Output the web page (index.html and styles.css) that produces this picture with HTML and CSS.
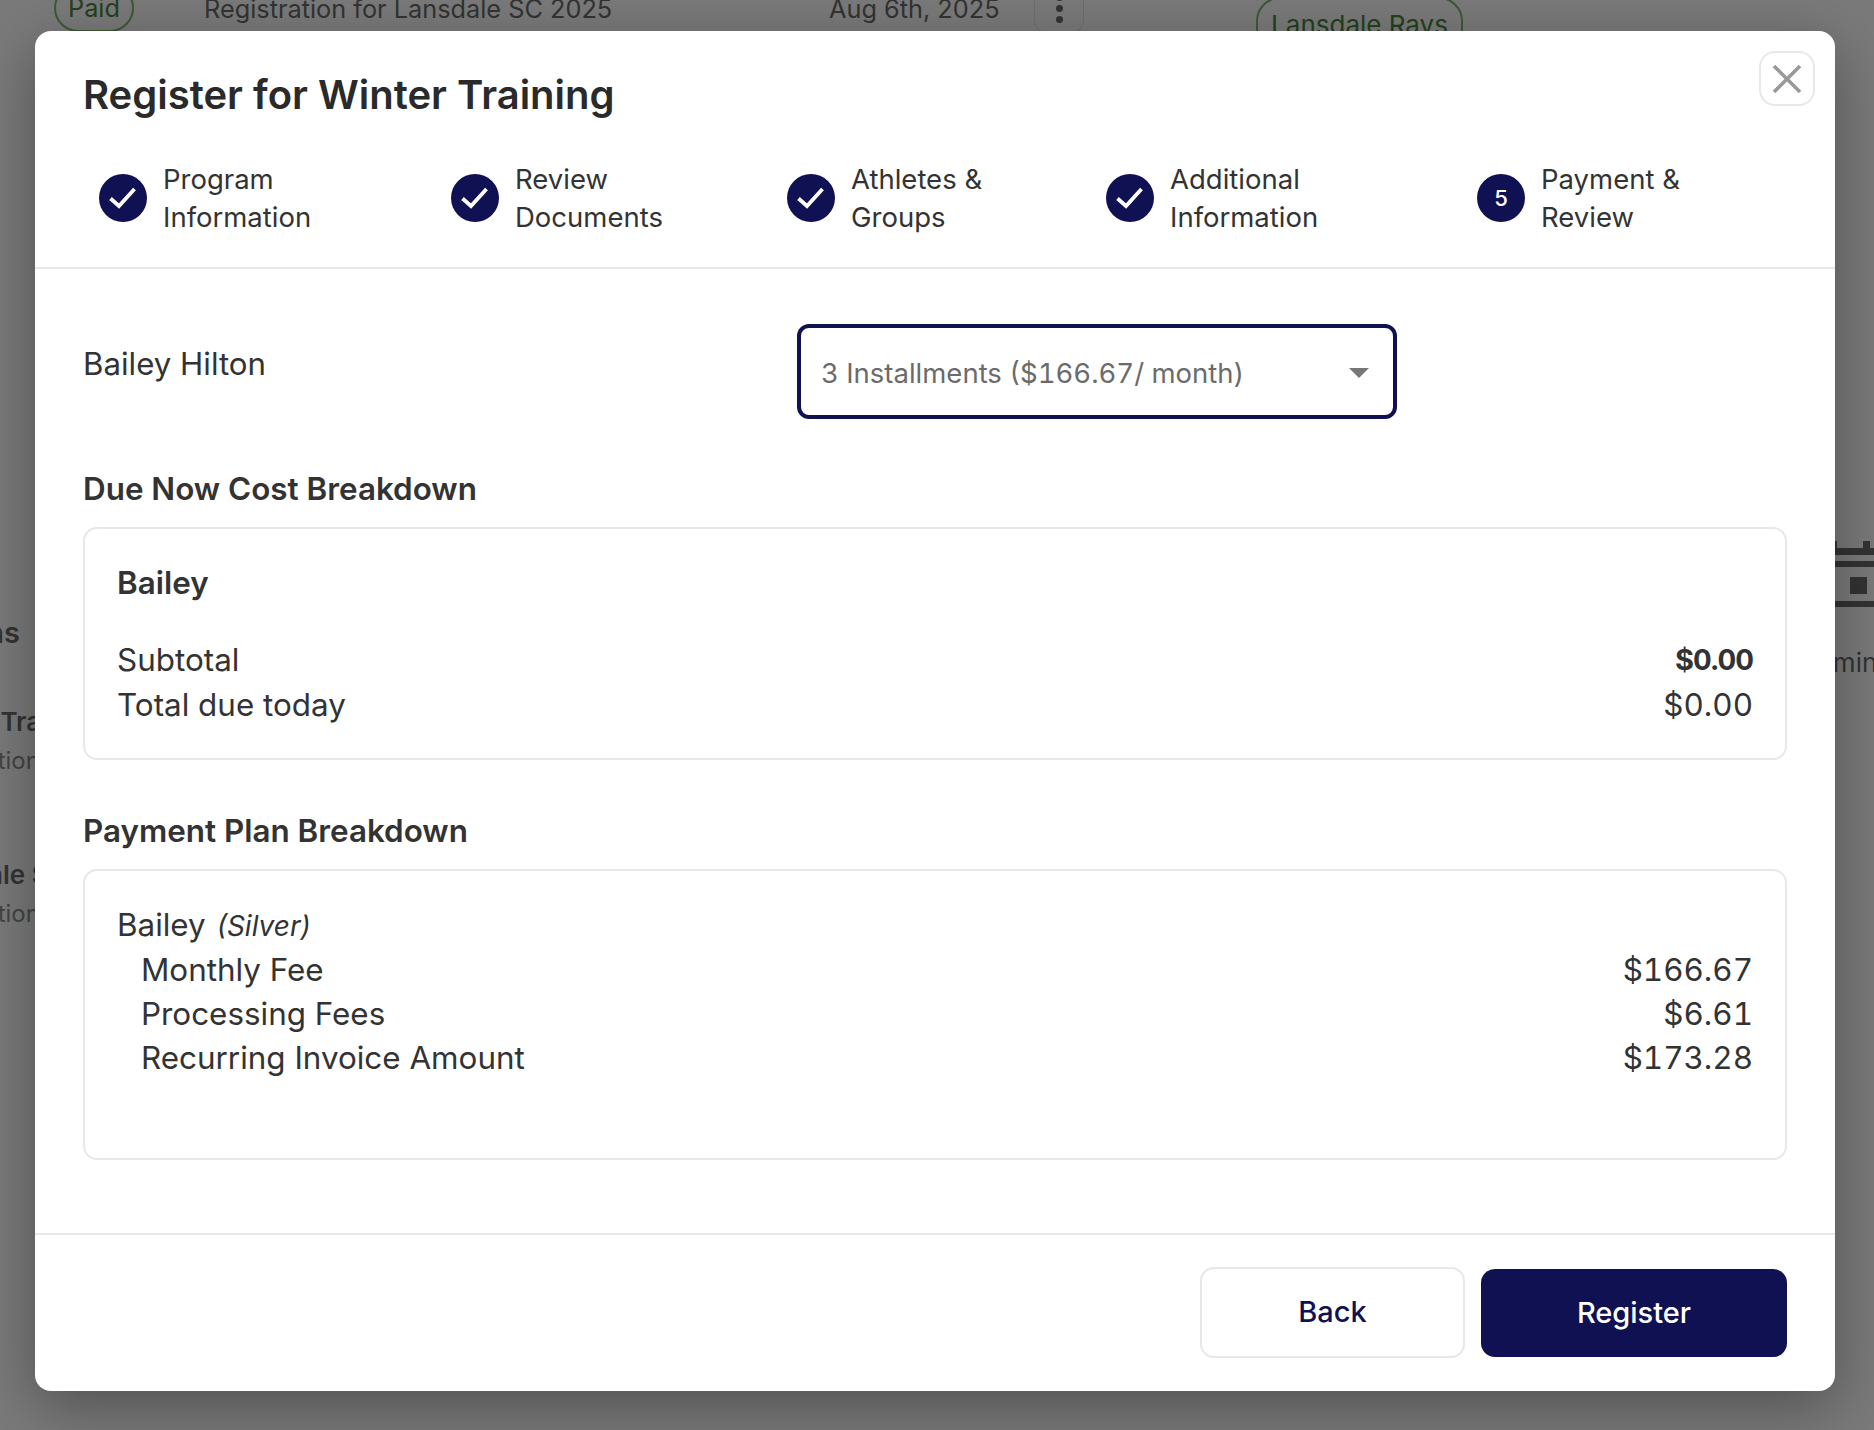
FILE: index.html
```html
<!DOCTYPE html>
<html lang="en">
<head>
<meta charset="utf-8">
<title>Register for Winter Training</title>
<link rel="stylesheet" href="styles.css">
</head>
<body>
<div class="page">
  <div class="top-row">
    <span class="pill pill-paid">Paid</span>
    <span class="top-title">Registration for Lansdale SC 2025</span>
    <span class="top-date">Aug 6th, 2025</span>
    <span class="dots"><i></i><i></i><i></i></span>
    <span class="pill pill-team">Lansdale Rays</span>
  </div>
  <div class="side-left">
    <div class="frag-head"><span>Registrations</span></div>
    <div class="frag-name"><span>Winter Training</span></div>
    <div class="frag-sub"><span>Registration</span></div>
    <div class="frag-name frag-second"><span>Lansdale SC</span></div>
    <div class="frag-sub"><span>Registration</span></div>
  </div>
  <div class="side-right">
    <svg class="cal" width="39" height="72" viewBox="0 0 39 72"><path d="M0 13h39v7H0zM0 26h39v6H0zM0 66h39v6H0zM15 42h17v17H15zM28 6h7v7h-7zM0 6h2v7H0z" fill="#333"/></svg>
    <div class="frag-min">Admin</div>
  </div>
</div>

<div class="modal">
  <button class="close" type="button" aria-label="Close">
    <svg width="30" height="30" viewBox="0 0 30 30"><path d="M2 2l26 26M28 2L2 28" stroke="#999" stroke-width="3.6" fill="none"/></svg>
  </button>
  <header class="modal-head">
    <h1 class="modal-title">Register for Winter Training</h1>
    <ol class="steps">
      <li class="step step-1"><span class="badge"><svg width="48" height="48" viewBox="0 0 48 48"><path d="M11.5 24.5l8.5 7.5 15.5-17" fill="none" stroke="#fff" stroke-width="3.8"/></svg></span><span class="step-label">Program<br>Information</span></li>
      <li class="step step-2"><span class="badge"><svg width="48" height="48" viewBox="0 0 48 48"><path d="M11.5 24.5l8.5 7.5 15.5-17" fill="none" stroke="#fff" stroke-width="3.8"/></svg></span><span class="step-label">Review<br>Documents</span></li>
      <li class="step step-3"><span class="badge"><svg width="48" height="48" viewBox="0 0 48 48"><path d="M11.5 24.5l8.5 7.5 15.5-17" fill="none" stroke="#fff" stroke-width="3.8"/></svg></span><span class="step-label">Athletes &amp;<br>Groups</span></li>
      <li class="step step-4"><span class="badge"><svg width="48" height="48" viewBox="0 0 48 48"><path d="M11.5 24.5l8.5 7.5 15.5-17" fill="none" stroke="#fff" stroke-width="3.8"/></svg></span><span class="step-label">Additional<br>Information</span></li>
      <li class="step step-5"><span class="badge badge-num">5</span><span class="step-label">Payment &amp;<br>Review</span></li>
    </ol>
  </header>

  <main class="modal-body">
    <div class="athlete-row">
      <span class="athlete-name">Bailey Hilton</span>
      <div class="select">
        <span>3 Installments ($166.67/ month)</span>
        <span class="caret"></span>
      </div>
    </div>

    <h2 class="section-title">Due Now Cost Breakdown</h2>
    <section class="card card-due">
      <div class="card-name">Bailey</div>
      <div class="row"><span>Subtotal</span><strong class="money money-bold">$0.00</strong></div>
      <div class="row"><span>Total due today</span><span class="money">$0.00</span></div>
    </section>

    <h2 class="section-title section-plan">Payment Plan Breakdown</h2>
    <section class="card card-plan">
      <div class="plan-row">Bailey <em class="tier">(Silver)</em></div>
      <div class="plan-row indent"><span>Monthly Fee</span><span class="money">$166.67</span></div>
      <div class="plan-row indent"><span>Processing Fees</span><span class="money">$6.61</span></div>
      <div class="plan-row indent"><span>Recurring Invoice Amount</span><span class="money">$173.28</span></div>
    </section>
  </main>

  <footer class="modal-foot">
    <button class="btn btn-back" type="button">Back</button>
    <button class="btn btn-register" type="button">Register</button>
  </footer>
</div>
</body>
</html>
```
FILE: styles.css
```css
* { box-sizing: border-box; }
html, body { margin: 0; height: 100%; }
body {
  width: 1874px;
  height: 1430px;
  overflow: hidden;
  position: relative;
  background: #7a7a7a;
  font-family: Inter, "Liberation Sans", sans-serif;
  color: #2e2e2e;
}

/* dimmed page behind the dialog */
.page { height: 1430px; position: relative; overflow: hidden; color: #333; }
.top-row {
  height: 31px;
  display: flex;
  align-items: center;
  padding-left: 54px;
  font-size: 25.3px;
  line-height: 30px;
  position: relative;
  top: -6px;
}
.pill { border: 2px solid #3c5a34; color: #24401d; border-radius: 24px; display: flex; align-items: center; justify-content: center; flex: none; }
.pill-paid { width: 80px; height: 48px; margin-top: -4px; }
.top-title { margin-left: 70px; width: 625px; flex: none; white-space: nowrap; margin-top: -2px; }
.top-date { width: 206px; flex: none; white-space: nowrap; margin-top: -2px; }
.dots { width: 50px; height: 50px; border: 1px solid #6e6e6e; border-radius: 14px; display: flex; flex-direction: column; align-items: center; justify-content: center; gap: 4px; margin-top: -2px; margin-left: -1px; flex: none; }
.dots i { width: 7px; height: 7px; border-radius: 50%; background: #333; }
.pill-team { width: 207px; height: 56px; margin-left: 172px; margin-top: 30px; white-space: nowrap; font-size: 26px; }
.side-left { position: absolute; left: 0; top: 610px; width: 35px; overflow: hidden; white-space: nowrap; }
.frag-head { font-size: 29px; font-weight: 600; height: 46px; line-height: 46px; display: flex; justify-content: flex-end; padding-right: 15px; }
.frag-head span { flex: none; }
.frag-name { font-size: 26px; font-weight: 600; margin-top: 48px; line-height: 36px; margin-left: -90px; }
.frag-sub { font-size: 24px; line-height: 42px; color: #444; margin-left: -95px; }
.frag-second { margin-top: 75px; margin-left: -88px; }
.side-right { position: absolute; left: 1835px; top: 535px; width: 39px; overflow: hidden; }
.cal { display: block; }
.frag-min { font-size: 26px; line-height: 36px; margin-top: 38px; margin-left: -36px; color: #333; white-space: nowrap; }

/* dialog */
.modal {
  position: absolute;
  left: 35px;
  top: 31px;
  width: 1800px;
  height: 1360px;
  background: #fff;
  border-radius: 16px;
  box-shadow: 0 16px 60px rgba(0, 0, 0, .34);
  display: flex;
  flex-direction: column;
}
.close {
  position: absolute;
  right: 20px;
  top: 20px;
  width: 56px;
  height: 55px;
  padding: 0;
  background: #fff;
  border: 2px solid #e8e8e8;
  border-radius: 16px;
  display: flex;
  align-items: center;
  justify-content: center;
}
.modal-head { height: 238px; border-bottom: 2px solid #e8e8e8; padding: 40px 48px 0; }
.modal-title { margin: 0; font-size: 40px; line-height: 48px; font-weight: 600; color: #2a2a2a; }
.steps { list-style: none; margin: 40px 0 0; padding: 0 0 0 16px; display: flex; }
.step { display: flex; align-items: center; gap: 16px; flex: none; }
.step-1 { width: 352px; }
.step-2 { width: 336px; }
.step-3 { width: 319px; }
.step-4 { width: 371px; }
.badge { width: 48px; height: 48px; border-radius: 50%; background: #0f1153; color: #fff; display: flex; align-items: center; justify-content: center; flex: none; }
.badge-num { font-size: 22px; font-weight: 500; }
.step-label { font-size: 27.5px; line-height: 37.5px; padding-top: 2px; color: #333; }

.modal-body { flex: 1; padding: 55px 48px 0; }
.athlete-row { display: flex; align-items: flex-start; height: 95px; }
.athlete-name { width: 714px; font-size: 31.25px; line-height: 36px; margin-top: 22px; color: #333; flex: none; }
.select {
  width: 600px;
  height: 95px;
  border: 4px solid #0f1153;
  border-radius: 12px;
  display: flex;
  align-items: center;
  justify-content: space-between;
  padding: 2px 24px 0 20px;
  font-size: 27.5px;
  font-variant-numeric: tabular-nums;
  color: #6b6b6b;
}
.caret { width: 0; height: 0; border-left: 10px solid transparent; border-right: 10px solid transparent; border-top: 10px solid #777; }
.section-title { margin: 52px 0 0; font-size: 31.4px; line-height: 36px; font-weight: 600; color: #333; }
.section-plan { margin-top: 53px; }
.card { border: 2px solid #e8e8e8; border-radius: 14px; padding: 0 32px; margin-top: 20px; font-size: 31.4px; color: #333; }
.card-due { height: 233px; padding-top: 34px; }
.card-name { font-weight: 600; line-height: 40px; margin-bottom: 35px; }
.row { display: flex; justify-content: space-between; align-items: baseline; line-height: 45px; }
.money { font-variant-numeric: tabular-nums; }
.money-bold { font-weight: 700; font-size: 29px; letter-spacing: -1px; transform: translateY(-1px); }
.card-plan { height: 291px; padding-top: 32px; }
.plan-row { line-height: 44px; display: flex; justify-content: space-between; align-items: baseline; }
.plan-row:first-child { justify-content: flex-start; gap: 11px; }
.indent { padding-left: 24px; }
.tier { font-size: 28px; }

.modal-foot {
  height: 158px;
  border-top: 2px solid #e8e8e8;
  padding: 32px 48px 0 0;
  display: flex;
  justify-content: flex-end;
  gap: 16px;
}
.btn { font-family: inherit; font-size: 29px; font-weight: 500; border-radius: 14px; padding: 0 0 2px; }
.btn-back { width: 265px; height: 91px; background: #fff; border: 2px solid #e8e8e8; color: #0f1153; }
.btn-register { width: 306px; height: 88px; margin-top: 2px; background: #0f1153; border: 0; color: #fff; }
```
